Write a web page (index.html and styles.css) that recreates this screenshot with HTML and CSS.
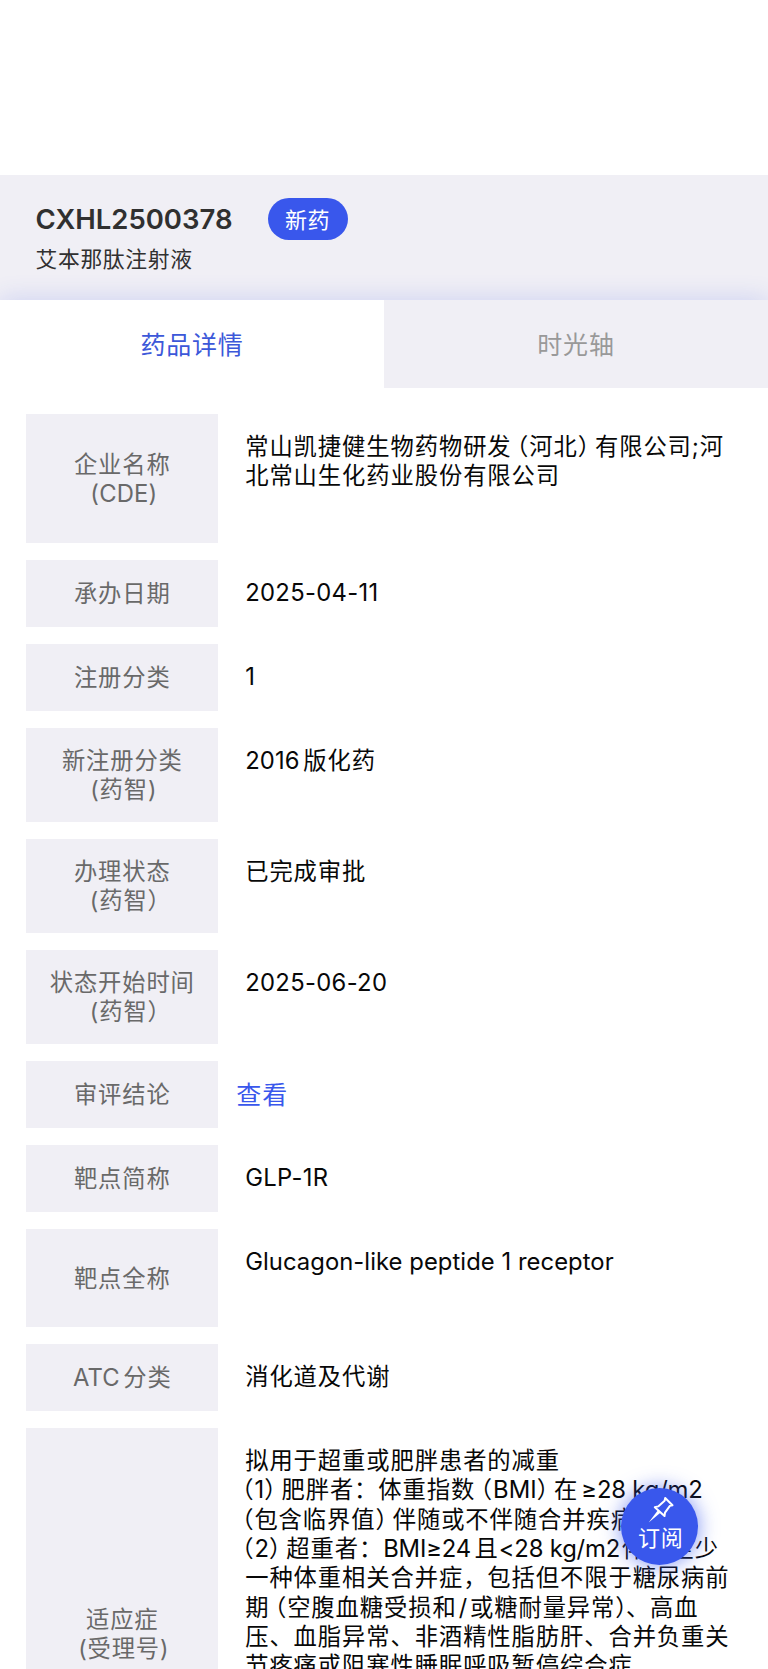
FILE: index.html
```html
<!DOCTYPE html>
<html lang="zh-CN">
<head>
<meta charset="utf-8">
<title>药品详情</title>
<link rel="stylesheet" href="styles.css">
</head>
<body>
<main class="screen">
  <header class="head">
    <div class="title-row"><h1 class="code">CXHL2500378</h1><span class="badge">新药</span></div>
    <p class="drug">艾本那肽注射液</p>
  </header>
  <nav class="tabs">
    <a class="tab active">药品详情</a>
    <a class="tab">时光轴</a>
  </nav>
  <section class="rows">
    <div class="row company"><div class="label"><span>企业名称</span><span class="en note">(CDE)</span></div>
      <div class="value"><p>常山凯捷健生物药物研发<i class="po">（</i>河北<i class="pc">）</i>有限公司;河</p><p>北常山生化药业股份有限公司</p></div></div>
    <div class="row"><div class="label"><span>承办日期</span></div><div class="value"><p class="en date">2025-04-11</p></div></div>
    <div class="row"><div class="label"><span>注册分类</span></div><div class="value"><p class="en">1</p></div></div>
    <div class="row double"><div class="label"><span>新注册分类</span><span class="note">(药智)</span></div><div class="value"><p><span class="en mix-r">2016</span>版化药</p></div></div>
    <div class="row double"><div class="label"><span>办理状态</span><span class="note">(药智<i class="close">）</i></span></div><div class="value"><p>已完成审批</p></div></div>
    <div class="row double"><div class="label"><span>状态开始时间</span><span class="note">(药智<i class="close">）</i></span></div><div class="value"><p class="en date">2025-06-20</p></div></div>
    <div class="row"><div class="label"><span>审评结论</span></div><div class="value link"><a>查看</a></div></div>
    <div class="row"><div class="label"><span>靶点简称</span></div><div class="value"><p class="en date">GLP-1R</p></div></div>
    <div class="row target"><div class="label"><span>靶点全称</span></div><div class="value"><p class="en name">Glucagon-like peptide 1 receptor</p></div></div>
    <div class="row"><div class="label"><span><span class="en mix-r">ATC</span>分类</span></div><div class="value"><p>消化道及代谢</p></div></div>
    <div class="row indication"><div class="label"><span>适应症</span><span class="note">(受理号)</span></div>
      <div class="value">
        <p>拟用于超重或肥胖患者的减重</p>
        <p><i class="ps">（</i><span class="en">1</span><i class="pc">）</i>肥胖者：体重指数<i class="po">（</i><span class="en">BMI</span><i class="pc">）</i>在<span class="en dense mix-l">≥28 kg/m2</span></p>
        <p><i class="ps">（</i>包含临界值<i class="pc">）</i>伴随或不伴随合并疾病；</p>
        <p><i class="ps">（</i><span class="en">2</span><i class="pc">）</i>超重者：<span class="en dense mix-r">BMI≥24</span>且<span class="en dense unit">&lt;28 kg/m2</span>伴有至少</p>
        <p>一种体重相关合并症，包括但不限于糖尿病前</p>
        <p>期<i class="po">（</i>空腹血糖受损和<span class="slash">/</span>或糖耐量异常<i class="pn">）</i>、高血</p>
        <p>压、血脂异常、非酒精性脂肪肝、合并负重关</p>
        <p>节疼痛或阻塞性睡眠呼吸暂停综合症</p>
      </div></div>
  </section>
  <button class="fab">
    <svg class="pin" viewBox="0 0 26 27" aria-hidden="true"><path d="M16.7 2 24 9.3 21.4 9.9 16.5 16.7 16 20 6.3 11.2 9.7 10.4 16.1 4.7Z"/><path class="needle" d="M9.6 14 .2 26.5 12.2 16.6Z"/></svg>
    <span>订阅</span>
  </button>
</main>
</body>
</html>
```
FILE: styles.css
```css
* { box-sizing: border-box; }
body { margin: 0; background: #fff; font-family: Inter, "Noto Sans CJK SC", sans-serif; }
i { font-style: normal; }
p, h1 { margin: 0; }
.screen { position: relative; height: 1669px; overflow: hidden; padding-top: 175px; }
.head { height: 125px; padding: 23px 36px 0 35.5px; background: #f0eff5; color: #303030; }
.title-row { display: flex; align-items: center; height: 42px; }
.code { width: 232px; font-size: 27.5px; font-weight: 600; line-height: 40px; padding-bottom: 1px; white-space: nowrap; }
.badge { width: 80px; height: 42px; border-radius: 21px; background: #3957ec; color: #fff; font-size: 22px; line-height: 45px; text-align: center; letter-spacing: .5px; }
.drug { font-size: 21.8px; letter-spacing: .65px; line-height: 32px; margin-top: 3px; }
.tabs { position: relative; display: flex; height: 88px; box-shadow: 0 0 24px rgba(57, 87, 236, .2); clip-path: inset(-30px 0 0 0); }
.tab { flex: 1; background: #f0eff5; color: #999; text-align: center; font-size: 25px; letter-spacing: .8px; line-height: 90px; }
.tab.active { background: #fff; color: #3c58d9; border-radius: 3px; }
.rows { display: flex; flex-direction: column; gap: 17.3px; padding: 26px 26.3px 0; }
.row { display: flex; flex: none; height: 66.7px; }
.double { height: 93.7px; }
.company { height: 128.8px; }
.target { height: 97.7px; }
.indication { height: 411px; }
.label { width: 192px; flex: none; display: flex; flex-direction: column; align-items: center; justify-content: center; padding-top: 1px; background: #f0eff5; color: #696969; font-size: 23.3px; letter-spacing: .87px; line-height: 29.33px; white-space: nowrap; }
.value { flex: 1; padding: 18px 0 0 26.9px; color: #080808; font-size: 23.3px; letter-spacing: .92px; line-height: 29.33px; white-space: nowrap; }
.value p { height: 29.33px; }
.en { letter-spacing: .15px; font-size: 23.8px; }
.date { letter-spacing: .32px; }
.name { letter-spacing: .06px; }
.dense { letter-spacing: -.15px; }
.unit { margin-right: 2px; }
.note { padding-left: 3px; }
.mix-r { margin-right: 3.5px; }
.mix-l { margin-left: 3px; }
.po { margin-left: -6.5px; }
.pc { margin-right: -7px; }
.pn { margin-right: -2px; }
.ps { margin-left: -15px; }
.close { margin-right: -14px; }
.slash { margin: 0 2px; }
.link { padding: 0 0 0 18px; color: #3957ec; font-size: 25px; line-height: 68px; }
.fab { position: absolute; left: 620.7px; top: 1487.5px; width: 77px; height: 77px; padding: 8.5px 0 0; border: 0; border-radius: 50%; background: #3957ec; color: #fff; box-shadow: 0 0 20px rgba(57, 87, 236, .65); display: flex; flex-direction: column; align-items: center; font: 22px/30px Inter, "Noto Sans CJK SC", sans-serif; letter-spacing: .8px; }
.fab span { padding-left: 3px; }
.pin { width: 27px; height: 27px; margin-left: 5px; fill: none; stroke: #fff; stroke-width: 2; stroke-linejoin: round; overflow: visible; }
.needle { fill: #fff; stroke: none; }
```
